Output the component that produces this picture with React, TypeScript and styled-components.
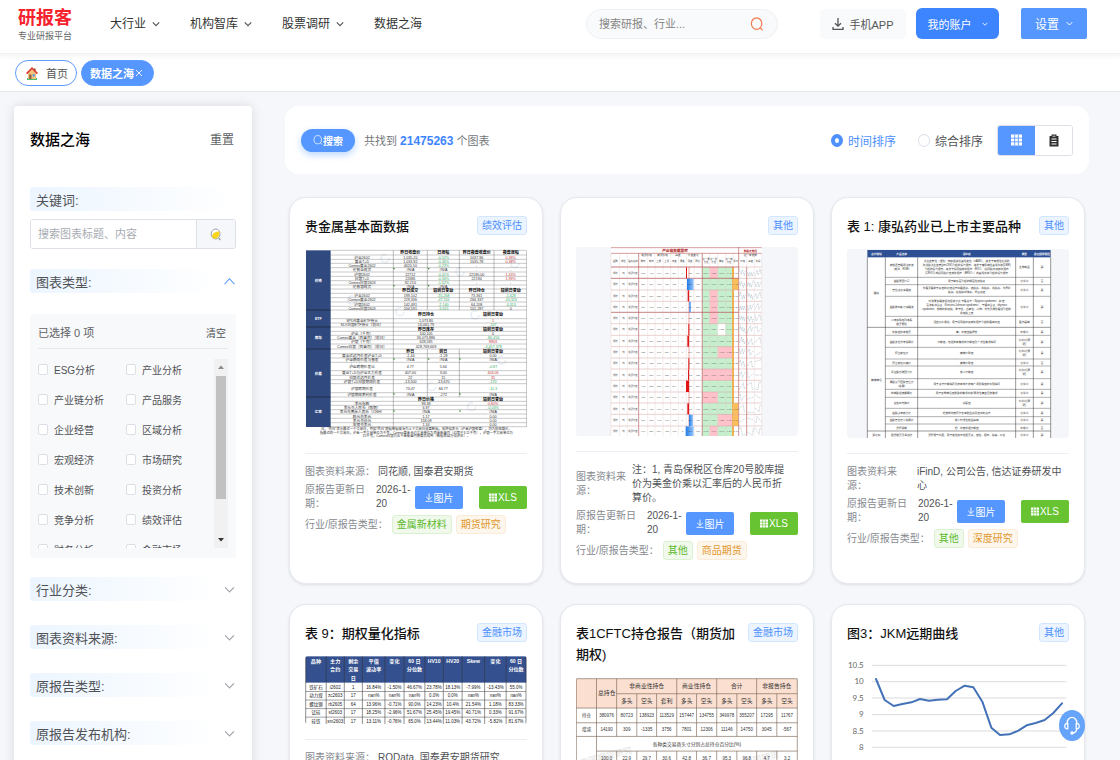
import React, { useState } from "react";
import styled, { createGlobalStyle, css } from "styled-components";

const Global = createGlobalStyle`
  *, *::before, *::after { box-sizing: border-box; }
  body {
    margin: 0;
    background: #f5f7fb;
    color: #303133;
    font-family: "Liberation Sans", "Noto Sans CJK SC", sans-serif;
    font-size: 12px;
    overflow-x: hidden;
  }
  button, input { font-family: inherit; }
  button { cursor: pointer; }
`;

/* ---------- top bar ---------- */

const Header = styled.header`
  display: flex;
  align-items: center;
  height: 54px;
  padding: 0 33px 6px 18px;
  background: #fff;
  border-bottom: 1px solid #f0f1f3;
  box-shadow: 0 2px 6px rgba(0, 0, 0, 0.05);
  position: relative;
`;

const Logo = styled.a`
  display: flex;
  flex-direction: column;
  width: 92px;
  text-decoration: none;
  strong { color: #f5222d; font-size: 18px; line-height: 24px; }
  span { color: #666; font-size: 9px; line-height: 12px; }
`;

const Nav = styled.nav`
  display: flex;
  gap: 30px;
`;

const NavLink = styled.a`
  display: flex;
  align-items: center;
  gap: 6px;
  color: #333;
  font-size: 12px;
  line-height: 18px;
  text-decoration: none;
  white-space: nowrap;
`;

const Actions = styled.div`
  display: flex;
  align-items: center;
  margin-left: auto;
`;

const SearchBox = styled.label`
  display: flex;
  align-items: center;
  width: 192px;
  height: 30px;
  margin-right: 42px;
  padding: 0 13px 0 12px;
  border: 1px solid #eef0f2;
  border-radius: 15px;
  background: #f9fafb;
  input {
    flex: 1;
    min-width: 0;
    padding: 0;
    border: 0;
    outline: 0;
    background: none;
    font-size: 11px;
  }
  input::placeholder { color: #858585; }
`;

const AppButton = styled.button`
  display: flex;
  align-items: center;
  justify-content: center;
  gap: 5px;
  width: 86px;
  height: 30px;
  margin-right: 10px;
  border: 0;
  border-radius: 5px;
  background: #f9fafb;
  color: #555;
  font-size: 11px;
`;

const MenuButton = styled.button<{ $soft?: boolean }>`
  display: flex;
  align-items: center;
  justify-content: center;
  gap: ${(p) => (p.$soft ? 7 : 10)}px;
  width: ${(p) => (p.$soft ? 66 : 83)}px;
  height: 31px;
  margin-left: ${(p) => (p.$soft ? 22 : 0)}px;
  border: 0;
  border-radius: ${(p) => (p.$soft ? 2 : 6)}px;
  background: ${(p) => (p.$soft ? "#5596ff" : "#3d84ff")};
  color: #fff;
  font-size: ${(p) => (p.$soft ? 12 : 11)}px;
`;

const TabBar = styled.div`
  display: flex;
  gap: 4px;
  height: 38px;
  padding: 6px 15px;
  background: #fff;
  border-bottom: 1px solid #e6e8eb;
`;

const Tab = styled.button<{ $active?: boolean }>`
  display: flex;
  align-items: center;
  height: 26px;
  padding: 0 8px 0 10px;
  border: 1px solid #5c9bff;
  border-radius: 13px;
  font-size: 11px;
  background: #fff;
  color: #555;
  gap: 8px;
  ${(p) =>
    p.$active &&
    css`
      padding: 0 10px 0 8px;
      background: #5596ff;
      color: #fff;
      font-weight: 700;
      gap: 1px;
    `}
`;

/* ---------- page body ---------- */

const Body = styled.div`
  display: flex;
  align-items: stretch;
  gap: 33px;
  padding: 14px 31px 0 14px;
`;

const Sidebar = styled.aside`
  flex: 0 0 238px;
  padding: 23px 16px 40px;
  border-radius: 4px;
  background: #fff;
  box-shadow: 0 0 12px rgba(0, 0, 0, 0.12);
`;

const SideHead = styled.div`
  display: flex;
  align-items: center;
  justify-content: space-between;
  height: 18px;
  margin-bottom: 40px;
  h2 { margin: 0; font-size: 15px; font-weight: 500; color: #000; }
  button { padding: 0 2px; border: 0; background: none; color: #606266; font-size: 12px; }
`;

const Band = styled.div`
  display: flex;
  align-items: center;
  height: 24px;
  padding-left: 6px;
  border-radius: 3px;
  background: linear-gradient(90deg, #ecf5ff, rgba(255, 255, 255, 0));
  color: #505256;
  font-size: 13px;
`;

const Fold = styled.button`
  display: flex;
  align-items: center;
  justify-content: space-between;
  width: 100%;
  height: 24px;
  margin-top: 24px;
  padding: 0 1px 0 6px;
  border: 0;
  border-radius: 3px;
  background: linear-gradient(90deg, #ecf5ff, rgba(255, 255, 255, 0) 92%);
  color: #505256;
  font-size: 13px;
`;

const FoldFirst = styled(Fold)`
  margin-top: 20px;
`;

const KeywordRow = styled.div`
  display: flex;
  height: 30px;
  margin-top: 8px;
  border: 1px solid #dcdfe6;
  border-radius: 3px;
  overflow: hidden;
  input {
    flex: 1;
    min-width: 0;
    padding: 0 7px;
    border: 0;
    outline: 0;
    font-size: 11px;
  }
  input::placeholder { color: #a8abb2; }
  button {
    display: flex;
    align-items: center;
    justify-content: center;
    width: 39px;
    padding: 0;
    border: 0;
    border-left: 1px solid #dcdfe6;
    background: #f5f7fa;
  }
`;

const Picker = styled.div`
  margin: 21px 0 -5px;
  padding: 8px 8px 10px;
  border-radius: 3px;
  background: #f8f9fb;
`;

const PickerHead = styled.div`
  display: flex;
  align-items: center;
  justify-content: space-between;
  height: 27px;
  padding-bottom: 6px;
  border-bottom: 1px solid #e4e7ed;
  color: #606266;
  font-size: 11px;
  button { padding: 0 2px; border: 0; background: none; color: #505256; font-size: 10px; }
`;

const PickerBody = styled.div`
  display: flex;
  height: 189px;
  margin-top: 10px;
  overflow: hidden;
`;

const Options = styled.div`
  flex: 1;
  display: grid;
  grid-template-columns: 1fr 1fr;
  grid-auto-rows: 30px;
  overflow: hidden;
`;

const Option = styled.label`
  display: flex;
  align-items: center;
  gap: 6px;
  height: 20px;
  color: #505256;
  font-size: 10px;
  white-space: nowrap;
  input {
    appearance: none;
    width: 10px;
    height: 11px;
    margin: 0;
    border: 1px solid #dcdfe6;
    border-radius: 2px;
    background: #fff;
  }
  input:checked { background: #5596ff; }
`;

const ScrollTrack = styled.div`
  display: flex;
  flex-direction: column;
  align-items: center;
  justify-content: space-between;
  width: 14px;
  background: #f1f1f1;
  svg { display: block; }
`;

const ScrollThumb = styled.div`
  width: 10px;
  height: 123px;
  margin-bottom: auto;
  background: #c1c1c1;
`;

const Main = styled.main`
  flex: 1;
  min-width: 0;
`;

const Toolbar = styled.div`
  display: flex;
  align-items: center;
  height: 68px;
  padding: 0 16px;
  border-radius: 14px;
  background: #fff;
`;

const SearchButton = styled.button`
  display: flex;
  align-items: center;
  justify-content: center;
  width: 54px;
  height: 23px;
  margin-right: 9px;
  padding: 0;
  border: 0;
  border-radius: 12px;
  background: #5596ff;
  box-shadow: 0 3px 7px rgba(64, 140, 255, 0.35);
  color: #fff;
  font-size: 10px;
  font-weight: 700;
`;

const Found = styled.p`
  margin: 0 auto 0 0;
  color: #73767a;
  font-size: 11px;
  strong { color: #3d84ff; font-size: 12px; }
`;

const Sort = styled.label<{ $on: boolean }>`
  display: flex;
  align-items: center;
  gap: 5px;
  margin-left: 22px;
  color: ${(p) => (p.$on ? "#4d90fe" : "#505256")};
  font-size: 12px;
  input {
    appearance: none;
    width: 12px;
    height: 13px;
    margin: 0;
    border: ${(p) => (p.$on ? "4px solid #4d90fe" : "1px solid #dcdfe6")};
    border-radius: 50%;
    background: #fff;
  }
`;

const ViewSwitch = styled.div`
  display: flex;
  width: 76px;
  height: 31px;
  margin-left: 14px;
  border: 1px solid #dcdfe6;
  border-radius: 3px;
  overflow: hidden;
`;

const ViewButton = styled.button<{ $on?: boolean }>`
  flex: 1;
  display: flex;
  align-items: center;
  justify-content: center;
  padding: 0;
  border: 0;
  background: ${(p) => (p.$on ? "#5596ff" : "#fff")};
`;

const Grid = styled.div`
  display: grid;
  grid-template-columns: repeat(3, minmax(0, 1fr));
  gap: 20px 17px;
  padding: 23px 4px 24px;
`;

const Card = styled.article`
  padding: 18px 15px 23px;
  border: 1px solid #e6e9f0;
  border-radius: 17px;
  background: #fff;
  box-shadow: 0 1px 3px rgba(0, 0, 0, 0.1);
`;

const CardHead = styled.div`
  display: flex;
  align-items: flex-start;
  justify-content: space-between;
  gap: 10px;
  margin-bottom: 12px;
  h3 { margin: 0; color: #111; font-size: 13px; font-weight: 500; line-height: 21px; }
`;

const tones = {
  blue: ["#ecf5ff", "#d3e6ff", "#4d90fe"],
  green: ["#f0f9eb", "#dcf1d2", "#5cb92c"],
  orange: ["#fdf6ec", "#faecd8", "#e0982c"],
};

const Tag = styled.span<{ $tone: keyof typeof tones }>`
  flex: none;
  height: 19px;
  padding: 0 4px;
  border: 1px solid ${(p) => tones[p.$tone][1]};
  border-radius: 3px;
  background: ${(p) => tones[p.$tone][0]};
  color: ${(p) => tones[p.$tone][2]};
  font-size: 10px;
  line-height: 17px;
  white-space: nowrap;
`;

const Thumb = styled.svg`
  display: block;
  width: 100%;
  height: auto;
  border-radius: 3px;
`;

const CardFoot = styled.div`
  display: flex;
  flex-direction: column;
  gap: 4px;
  margin-top: 15px;
  padding-top: 11px;
  border-top: 1px solid #ebeef5;
  font-size: 10px;
  line-height: 14px;
`;

const InfoRow = styled.div`
  display: flex;
  align-items: center;
  color: #505256;
`;

const InfoLabel = styled.span<{ $width?: number; $gap: number }>`
  flex: none;
  width: ${(p) => (p.$width ? `${p.$width}px` : "auto")};
  margin-right: ${(p) => p.$gap}px;
  color: #86898f;
`;

const InfoValue = styled.span<{ $width?: number }>`
  max-width: ${(p) => (p.$width ? `${p.$width}px` : "none")};
`;

const TagGroup = styled.span`
  display: flex;
  gap: 4px;
`;

const FileButtons = styled.span`
  display: flex;
  gap: 16px;
  margin-left: auto;
`;

const FileButton = styled.button<{ $green?: boolean }>`
  display: flex;
  align-items: center;
  justify-content: center;
  gap: 1px;
  width: 48px;
  height: 23px;
  padding: 0;
  border: 0;
  border-radius: 2px;
  background: ${(p) => (p.$green ? "#67c332" : "#5596ff")};
  color: #fff;
  font-size: 10px;
`;

const HelpButton = styled.button`
  position: fixed;
  right: 35px;
  bottom: 19px;
  display: flex;
  align-items: center;
  justify-content: center;
  width: 26px;
  height: 31px;
  padding: 0;
  border: 0;
  border-radius: 50%;
  background: #66a3fb;
`;

/* ---------- icons ---------- */

const Chevron = ({ size = 8, color = "#555", up = false, thin = false }) => (
  <svg width={size} height={size} viewBox="0 0 10 10" fill="none" stroke={color} strokeWidth={thin ? 1 : 1.4}>
    <path d={up ? "M0.5 7.5 5 2.5 9.5 7.5" : "M1 3 5 7.2 9 3"} />
  </svg>
);

const Lens = ({ size, color, width = 1.2 }: { size: number; color: string; width?: number }) => (
  <svg width={size} height={size} viewBox="0 0 14 14" fill="none" stroke={color} strokeWidth={width}>
    <ellipse cx="6.6" cy="6.6" rx="5.2" ry="5.8" />
    <path d="M10.3 10.8 12.6 13.4" />
  </svg>
);

const TrayIcon = () => (
  <svg width="12" height="14" viewBox="0 0 12 14" fill="none" stroke="#555" strokeWidth="1.3">
    <path d="M6 1v8M3 6.2 6 9.2l3-3M1 10v2.4h10V10" />
  </svg>
);

const ArrowDown = () => (
  <svg width="8" height="9" viewBox="0 0 8 9" fill="none" stroke="#fff" strokeWidth="0.9">
    <path d="M4 0.5v6M1.2 3.8 4 6.6l2.8-2.8M0.5 8.3h7" />
  </svg>
);

const GridIcon = ({ w = 8, h = 9, line = "#67c332" }) => (
  <svg width={w} height={h} viewBox="0 0 9 9">
    <rect width="9" height="9" fill="#fff" />
    <path d="M3 0v9M6 0v9M0 3h9M0 6h9" stroke={line} strokeWidth="0.7" />
  </svg>
);

const ClipIcon = () => (
  <svg width="10" height="13" viewBox="0 0 10 13">
    <path d="M0.5 2h2V0.5h5V2h2v10.5h-9z" fill="#303133" />
    <path d="M2.5 5h5M2.5 7.5h5M2.5 10h5" stroke="#fff" strokeWidth="1" />
    <path d="M3.6 2.2h2.8" stroke="#fff" strokeWidth="0.8" />
  </svg>
);

const HouseIcon = () => (
  <svg width="12" height="13" viewBox="0 0 12 13">
    <rect x="1" y="11" width="10" height="2" fill="#4bbf6b" />
    <rect x="8" y="1.5" width="1.6" height="3" fill="#a3452c" />
    <path d="M2 6 6 2.4 10 6v6H2z" fill="#f2c27c" />
    <path d="M0.6 6.6 6 1.2l5.4 5.4" fill="none" stroke="#d93a2b" strokeWidth="1.6" />
    <rect x="3.2" y="7.5" width="2.2" height="4.5" fill="#8a5a3a" />
    <rect x="6.6" y="7.2" width="2.2" height="2.2" fill="#4d9be8" />
  </svg>
);

const BulbLens = () => (
  <svg width="12" height="13" viewBox="0 0 12 13">
    <ellipse cx="5.6" cy="6" rx="4.4" ry="5" fill="#fff" stroke="#9aa0a6" />
    <path d="M2 8.2C3 4.4 6 3.6 9.4 3.6 10.2 8 7 11 5 10.6 3.4 10.4 2.4 9.6 2 8.2z" fill="#f9d51c" />
    <path d="M8.6 10 10.4 12" stroke="#9aa0a6" strokeWidth="1.3" />
  </svg>
);

const Headset = () => (
  <svg width="16" height="19" viewBox="0 0 16 19" fill="none" stroke="#fff" strokeWidth="1.3">
    <path d="M3.2 8V7a4.8 5.6 0 0 1 9.6 0v1" />
    <path d="M3.8 7.6v5.2C2 13.2.8 12 .8 10.2S2 7.2 3.8 7.6zM12.2 7.6v5.2c1.8.4 3-.8 3-2.6s-1.2-3-3-2.6z" />
    <path d="M12.6 13c0 2.4-1.4 3.8-4 4" />
    <circle cx="8" cy="17" r="1" fill="#fff" />
  </svg>
);

/* ---------- thumbnails ---------- */

type Cell = [x: number, y: number, text: string, color?: string, bold?: boolean];

const Cells = ({ items, size, color = "#333" }: { items: Cell[]; size: number; color?: string }) => (
  <g fontSize={size} textAnchor="middle" fill={color}>
    {items.map(([x, y, text, own, bold], i) => (
      <text key={i} x={x} y={y + size * 0.36} fill={own} fontWeight={bold ? 700 : 400}>
        {text}
      </text>
    ))}
  </g>
);

const G = "#2fae66";
const R = "#c8383c";

const metalsWide: [number, string, string, string, string, string?, string?][] = [
  [202, "沪金2602", "1,035.20", "-0.52%", "1037.96", "0.38%"],
  [214, "黄金T+D", "1,033.92", "-0.36%", "1035.78", "0.38%"],
  [227, "Comex黄金2602", "4620.50", "-0.23%", "-", "-"],
  [240, "伦敦金现货", "#N/A", "#N/A", "-", "-"],
  [253, "沪银2602", "22712", "-0.41%", "22180.00", "1.43%"],
  [266, "白银T+D", "22686", "-0.34%", "22194", "1.99%"],
  [278, "Comex白银2603", "92.210", "-1.02%", "-", "-"],
  [291, "伦敦银现货", "#N/A", "#N/A", "-", "-"],
  [316, "沪金2602", "199,102", "-35,268", "73,361", "-1,628"],
  [330, "Comex黄金2602", "229,336", "-47,116", "266,337", "-10,324"],
  [343, "沪银2602", "142,491", "-2,140", "64,208", "-4,313"],
  [355, "Comex白银2603", "204,591", "-3,615", "101,287", "0"],
];
const metalsPair: [number, string, string, string, string?][] = [
  [393, "SPDR黄金ETF持仓", "1,073.80", "1", R],
  [405, "SLV白银ETF持仓（前日）", "16,061.79", "-107", G],
  [430, "沪金（千克）", "100,105", "0"],
  [443, "Comex黄金（百盎司）（前日）", "36,073,886", "-80,456", G],
  [456, "沪银（千克）", "628,595", "8903", R],
  [470, "Comex白银（百盎司）（前日）", "428,769,669", "-3,457,378", G],
  [640, "美元指数", "99.38", "0.80%", R],
  [652, "美元兑人民币（即期）", "6.97", "-0.03%", G],
  [665, "美元兑离岸人民币（CNH）", "#N/A", "#N/A"],
  [679, "欧元兑美元", "1.17", "0.00"],
  [691, "美元兑日元", "158.09", "0.00"],
  [704, "英镑兑美元", "1.34", "0.00"],
];
const metalsTriple: [number, string, string, string, string, string?][] = [
  [497, "黄金近远月价差沪金T+D", "-1.44", "-1.28", "0.00"],
  [510, "沪金期现价差与基差", "#N/A", "#N/A", "#N/A"],
  [529, "沪金跨期价差比", "4.77", "5.64", "-0.87", G],
  [549, "黄金T+D与沪金主力价差", "407.00", "3.00", "404.06", R],
  [562, "白银近远月价差", "22", "15", "35", R],
  [575, "沪银T+D白银期现价差", "-13,500", "-13,670", "-170", G],
  [595, "沪银跨期价差", "73.47", "84.77", "-11.3", G],
  [615, "沪银期现套利价差", "#N/A", "-272", "#N/A"],
];

const MetalsThumb = () => {
  const heads: Cell[] = [
    [376, 188, "昨日收盘价", "#000", true], [475, 188, "日涨幅", "#000", true],
    [575, 188, "昨日夜盘收盘价", "#000", true], [677, 188, "夜盘涨幅", "#000", true],
    [376, 303, "昨日成交", "#000", true], [475, 303, "较前日变动", "#000", true],
    [575, 303, "昨日持仓", "#000", true], [677, 303, "较前日变动", "#000", true],
    [423, 373, "昨日持仓", "#000", true], [624, 373, "较前日变动", "#000", true],
    [423, 418, "昨日库存", "#000", true], [624, 418, "较前日变动", "#000", true],
    [376, 485, "昨日", "#000", true], [475, 485, "前日", "#000", true], [624, 485, "较前日变动", "#000", true],
    [423, 628, "昨日价格", "#000", true], [624, 628, "较前日变动", "#000", true],
  ];
  const body: Cell[] = [];
  const tint = (s: string) => (s.startsWith("-") && s.length > 1 ? G : undefined);
  metalsWide.forEach(([y, a, b, c, d, e = ""]) =>
    body.push([231, y, a], [376, y, b], [475, y, c, tint(c)], [575, y, d],
      [677, y, e, e.includes("%") ? R : tint(e)]));
  metalsPair.forEach(([y, a, b, c, k]) => body.push([231, y, a], [423, y, b], [624, y, c, k]));
  metalsTriple.forEach(([y, a, b, c, d, k]) =>
    body.push([231, y, a], [376, y, b], [475, y, c], [624, y, d, k]));
  const lines = [181, 195, 208, 220, 233, 246, 259, 272, 285, 297, 310, 323, 336, 349, 360, 386, 399, 411, 424,
    436, 449, 462, 477, 491, 504, 517, 542, 556, 569, 581, 608, 621, 634, 646, 659, 672, 685, 698, 710];
  return (
    <Thumb viewBox="60 177 666 567" role="img" aria-label="贵金属基本面数据">
      <rect x="60" y="177" width="666" height="567" fill="#fff" />
      <g fill="none" stroke="#e9eff7" strokeWidth="5">
        {[[300, 205], [525, 245], [690, 220], [345, 365], [570, 375], [200, 330], [440, 590], [210, 520], [650, 510], [240, 680], [560, 650]].map(
          ([x, y]) => <circle key={`${x}-${y}`} cx={x} cy={y} r="12" strokeDasharray="60 20" />,
        )}
      </g>
      {lines.map((y) => <path key={y} d={`M137 ${y}H725`} stroke="#777" strokeWidth="1.2" />)}
      <path d="M325 181V710M427 181V360M427 477V621M523 181V360M523 477V621M627 181V360M725 181V710" stroke="#666" strokeWidth="1.3" fill="none" />
      <rect x="63" y="181" width="74" height="530" fill="#30497f" />
      <path d="M63 360H137M63 411H137M63 477H137M63 621H137" stroke="#111" strokeWidth="1.5" />
      <Cells size={11} items={[[100, 271, "价格", "#fff", true], [100, 386, "ETF", "#fff", true], [100, 444, "库存", "#fff", true], [100, 550, "价差", "#fff", true], [100, 666, "汇率", "#fff", true]]} />
      <Cells size={12} items={heads} />
      <Cells size={11} items={body} />
      <g fill="#2a8f2a">
        {[[325, 234], [429, 234], [325, 285], [429, 285], [325, 505], [429, 505], [523, 505], [325, 610], [523, 610], [325, 661], [523, 661]].map(
          ([x, y]) => <rect key={`${x}${y}`} x={x} y={y} width="4" height="4" />,
        )}
      </g>
      <Cells size={10} items={[
        [394, 717, "注：“昨日”表示最近一个交易日，例如“昨日”根据数据来源为上个交易日收盘数据，涨跌幅表示（沪金沪银夜盘），均为前结算价。"],
        [394, 727, "指最近的一个交易日，沪金一手交易单位为千克，Comex黄金合约交易单位为百金衡盎司（约等于3.11千克），沪银一手交易单位为"],
        [394, 737, "15千克，Comex白银为五千金衡盎司换算后得到（数据取自万得资讯）。"],
      ]} />
    </Thumb>
  );
};

const HeatThumb = () => {
  const rows = [231, 265, 300, 334, 367, 401, 436, 470, 504, 537, 571, 606, 639, 673, 708, 739];
  const cols = [171, 197, 220, 254, 281, 303, 327, 350, 373, 397, 420, 443, 467, 491, 515, 537, 554, 578, 601, 623];
  const pink: [number, number, number][] = [[467, 0, 24], [467, 2, 24], [467, 3, 24], [467, 4, 24], [491, 7, 44], [445, 9, 90], [445, 11, 46], [491, 13, 44], [467, 14, 24]];
  const blue: [number, number, number][] = [[399, 1, 20], [406, 3, 5], [405, 13, 12], [395, 14, 24]];
  const red: [number, number, number][] = [[396, 0, 3], [401, 2, 4], [403, 5, 3], [400, 6, 5], [403, 8, 3], [402, 9, 3], [396, 10, 9], [400, 12, 5]];
  const h = (r: number) => rows[r + 1] - rows[r];
  const text: Cell[] = [];
  for (let r = 0; r < 15; r++) {
    const y = rows[r] + h(r) / 2;
    for (let c = 0; c < 16; c++) {
      const x = (cols[c] + cols[c + 1]) / 2;
      const n = ((r * 37 + c * 53) % 89) + 10;
      text.push([x, y, c === 0 ? "钢材" : c === 1 ? "吨" : c === 2 ? "现货价差" : c === 8 ? `${n % 9}` : c > 10 ? `0.${n}` : `${n}${n % 7}`]);
    }
  }
  return (
    <Thumb viewBox="66 171 666 567" role="img" aria-label="产业链数据跟踪日报">
      <defs>
        <linearGradient id="bar">
          <stop offset="0" stopColor="#1f7be8" />
          <stop offset="1" stopColor="#9cc8fb" />
        </linearGradient>
      </defs>
      <rect x="66" y="171" width="666" height="567" fill="#f5f6f9" />
      <rect x="171" y="171" width="452" height="568" fill="#fff" />
      <rect x="445" y="231" width="90" height="508" fill="#c6efce" />
      {pink.map(([x, r, w], i) => <rect key={i} x={x} y={rows[r]} width={w} height={h(r)} fill="#ffc2cb" />)}
      <rect x="491" y={rows[5]} width="23" height={h(5)} fill="#fff" />
      <rect x="534" y="231" width="6" height="508" fill="#f4ae3d" />
      {[1, 12, 13].map((r) => <rect key={r} x="537" y={rows[r]} width="16" height={h(r)} fill="#fbbf5a" />)}
      {rows.slice(0, 15).map((y) => <path key={y} d={`M171 ${y}H623`} stroke="#d49c9c" strokeWidth="1.4" />)}
      {cols.map((x) => <path key={x} d={`M${x} 190V739`} stroke="#e2c6c6" strokeWidth="1" />)}
      <path d="M171 173H623M171 231H554M171 265H554M171 367H554M171 190H623M254 190V739M445 190V739M554 171V739M578 231V739" stroke="#b04a4a" strokeWidth="1.6" fill="none" />
      <path d="M405 231V739" stroke="#d55" strokeWidth="1.6" />
      {blue.map(([x, r, w], i) => <rect key={i} x={x} y={rows[r] + 1} width={w} height={h(r) - 1} fill="url(#bar)" />)}
      {red.map(([x, r, w], i) => <rect key={i} x={x} y={rows[r] + 1} width={w} height={h(r) - 1} fill="#e01616" />)}
      <Cells size={7} color="#555" items={text} />
      <Cells size={11} items={[[363, 182, "产业链数据跟踪", "#a11", true]]} />
      <Cells size={8} items={[[589, 182, "数据走势图", "#a11", true], [278, 195, "现货价格"], [326, 195, "期货价格"], [372, 195, "基差"], [418, 195, "价差变化"], [589, 195, "近一年走势"]]} />
      <Cells size={7} items={[[184, 212, "品种"], [208, 212, "单位"], [237, 212, "指标名称"], [267, 214, "昨日"], [292, 214, "前日"], [314, 214, "上周"], [338, 214, "上月"], [361, 214, "日变"], [385, 214, "周变"], [408, 214, "月变"], [431, 214, "同比"], [456, 208, "近一周"], [456, 217, "分位"], [479, 208, "近一月"], [479, 217, "分位"], [502, 212, "季度"], [525, 208, "近一年"], [525, 217, "分位"], [545, 212, "评价"], [566, 214, "价格"], [590, 214, "基差"], [612, 214, "利润"]]} />
      <g fill="none" stroke="#7d93a3" strokeWidth="1.1">
        {rows.slice(0, 15).map((y, r) =>
          [556, 580, 603].map((x, c) => {
            const d = [0, 1, 2, 3, 4, 5, 6].map((k) => `${x + k * 3},${y + 5 + ((r * 7 + c * 11 + k * (9 + r + c * 3)) % 24)}`).join(" ");
            return <polyline key={`${r}-${c}`} points={d} strokeDasharray="5 2" />;
          }),
        )}
      </g>
    </Thumb>
  );
};

const drugRows: [number, string[], string[], string[], string][] = [
  [232, ["康柏西普眼用注射液", "（朗沐，RISE）"], ["新生血管性（湿性）年龄相关性黄斑变性（nAMD），继发于病理性近视的", "脉络膜新生血管(pmCNV)引起的视力损伤、继发于糖尿病性黄斑水肿(DME)", "引起的视力损伤、继发于视网膜静脉阻塞（RVO）（视网膜中央静脉阻塞", "(CRVO) 或视网膜分支静脉阻塞（BRVO））的黄斑水肿引起的视力损伤"], ["生物制品"], "是"],
  [273, ["盐酸莫西沙星"], ["用于敏感菌引起的细菌性结膜炎"], ["化学药"], "否"],
  [301, ["普拉洛芬滴眼液"], ["外眼及眼前节炎症的对症治疗如眼睑炎、结膜炎、角膜炎、巩膜炎、浅层巩", "膜炎、虹膜睫状体炎、术后炎症"], ["化学药"], "是"],
  [350, ["盐酸依匹斯汀滴眼液"], ["环孢素滴眼液促进泪液分泌 干眼治疗（Sjögren syndrome）和 史", "蒂文斯综合征（Stevens-Johnson syndrome），干眼综合征（dryness", "syndrome）伴随的角结膜、季节性、过敏性、药物、外伤及隐形眼镜引起的", "角结膜上皮"], ["化学药"], "是"],
  [396, ["二甲双胍格列本脲", "胶囊颗粒"], ["活血化瘀通络，用于视网膜中央静脉阻塞引起的眼底出血"], ["医疗器械"], "否"],
  [426, ["松龄血脉康胶囊"], ["高、中度血脂异常"], ["中成药"], "是"],
  [455, ["盐酸文拉法辛缓释片"], ["抑郁症、包括伴有焦虑的抑郁症及广泛性焦虑障碍"], ["化学药(原", "研)"], "是"],
  [490, ["阿立哌唑片"], ["精神分裂症"], ["化学药(原", "研)"], "是"],
  [518, ["阿立哌唑口崩片"], ["精神分裂症"], ["化学药"], "否"],
  [547, ["氢溴酸伏硫西汀片"], ["成人抑郁症"], ["化学药(原", "研)"], "是"],
  [582, ["草酸艾司西酞普兰片", "（缓释）"], ["用于治疗抑郁障碍及伴有或不伴有广场恐惧症的惊恐障碍"], ["化学药"], "是"],
  [610, ["枸橼酸坦度螺酮片"], ["用于各种神经症所致的焦虑状态/原发性高血压伴焦虑"], ["化学药"], "是"],
  [639, ["右佐匹克隆片"], ["失眠症"], ["化学药(原", "研)"], "是"],
  [668, ["盐酸多奈哌齐片"], ["轻度或中度阿尔茨海默型痴呆症状的治疗"], ["化学药"], "是"],
  [691, ["盐酸普拉克索缓释片"], ["成人特发性帕金森病"], ["化学药"], "是"],
  [713, ["舒肝解郁"], ["轻、中度单相抑郁症"], ["中成药"], "否"],
  [735, ["胆舒胶囊及渴络欣"], ["舒肝理气利胆，用于慢性结石性胆囊炎，慢性、胆石、胁痛、口苦"], ["化学药"], "是"],
];

const DrugThumb = () => {
  const text: Cell[] = [];
  drugRows.forEach(([y, a, b, c, d]) => {
    a.forEach((t, i) => text.push([230, y + (i - (a.length - 1) / 2) * 12, t]));
    b.forEach((t, i) => text.push([425, y + (i - (b.length - 1) / 2) * 12, t]));
    c.forEach((t, i) => text.push([598, y + (i - (c.length - 1) / 2) * 12, t]));
    text.push([651, y, d]);
  });
  return (
    <Thumb viewBox="66 177 666 567" role="img" aria-label="康弘药业已上市主要品种">
      <rect x="66" y="177" width="666" height="567" fill="#f5f6f9" />
      <rect x="127" y="180" width="550" height="565" fill="#fff" />
      <rect x="127" y="180" width="550" height="22" fill="#2d4f93" />
      {[262, 284, 319, 379, 436, 472, 507, 528, 566, 598, 622, 655, 680, 702].map((y) => (
        <path key={y} d={`M181 ${y}H677`} stroke="#555" strokeWidth="1.4" />
      ))}
      <path d="M127 412H677M127 723H677M181 202V745M278 202V745M572 202V745M625 202V745M127 202V745M677 202V745" stroke="#333" strokeWidth="1.5" fill="none" />
      <Cells size={8} items={[[154, 191, "治疗领域", "#fff", true], [230, 191, "产品名称", "#fff", true], [425, 191, "适应症", "#fff", true], [598, 191, "类型", "#fff", true], [651, 191, "是否国家医保", "#fff", true], [154, 308, "眼科"], [154, 569, "精神神经"], [154, 735, "消化科"]]} />
      <Cells size={8} items={text} />
    </Thumb>
  );
};

const ivCols = [62, 122, 175, 228, 294, 350, 411, 465, 520, 586, 649, 707];
const ivHead = [["品种"], ["主力", "合约"], ["剩余", "交易", "日"], ["平值", "波动率"], ["变化"], ["60 日", "分位数"], ["HV10"], ["HV20"], ["Skew"], ["变化"], ["60 日", "分位数"]];
const ivRows = [
  ["铁矿石", "i2602", "1", "16.84%", "-1.50%", "46.67%", "23.78%", "18.13%", "-7.99%", "-13.43%", "55.0%"],
  ["动力煤", "zc2603", "17", "nan%", "nan%", "nan%", "0.0%", "0.0%", "nan%", "nan%", "nan%"],
  ["螺纹钢", "rb2605", "64", "13.96%", "-0.71%", "90.0%", "14.23%", "10.4%", "21.54%", "1.18%", "83.33%"],
  ["锰硅", "sf2603", "17", "18.25%", "-2.96%", "51.67%", "25.45%", "19.45%", "40.71%", "0.33%", "91.67%"],
  ["硅铁", "sm2603", "17", "13.11%", "-0.76%", "65.0%", "13.44%", "11.03%", "43.72%", "-5.82%", "81.67%"],
];

const OptionsThumb = () => {
  const mid = (i: number) => (ivCols[i] + ivCols[i + 1]) / 2;
  const head: Cell[] = ivHead.flatMap((ls, i) => ls.map((t, k): Cell => [mid(i), 184 + k * 24, t, "#fff", true]));
  const body: Cell[] = ivRows.flatMap((r, k) => r.map((t, i): Cell => [mid(i), 259 + k * 25, t, "#222"]));
  return (
    <Thumb viewBox="60 168 650 200" role="img" aria-label="期权量化指标">
      <rect x="60" y="168" width="650" height="200" fill="#fff" />
      <rect x="62" y="169" width="646" height="77" fill="#34508e" />
      {[272, 297, 322, 347].map((y) => <path key={y} d={`M62 ${y}H707`} stroke="#555" strokeWidth="1.6" />)}
      {ivCols.map((x) => <path key={x} d={`M${x} 169V370`} stroke="#333" strokeWidth="1.6" />)}
      <Cells size={15} items={head} />
      <Cells size={13} items={body} />
    </Thumb>
  );
};

const cftcCols = [856, 915, 974, 1033, 1091, 1150, 1208, 1267, 1326, 1384, 1443, 1503];
const cftcRows: [number, string[]][] = [
  [342, ["持仓", "380976", "80723", "138923", "113529", "157447", "134755", "349978", "355207", "17295", "11767"]],
  [384, ["增减", "14190", "309", "-1335", "3756", "7801", "12306", "11146", "14750", "3045", "-567"]],
  [469, ["", "100.0", "22.9", "29.7", "30.6", "42.8", "36.7", "95.3", "96.8", "4.7", "3.2"]],
];

const CftcThumb = () => {
  const mid = (i: number) => (cftcCols[i] + cftcCols[i + 1]) / 2;
  const subs = ["多头", "空头", "套利", "多头", "空头", "多头", "空头", "多头", "空头"];
  return (
    <Thumb viewBox="855 230 650 410" role="img" aria-label="CFTC持仓报告">
      <rect x="855" y="230" width="650" height="410" fill="#fff" />
      <rect x="856" y="235" width="647" height="86" fill="#fbe0d2" />
      <g fill="#e4e4e4" fontSize="26">
        <text transform="translate(870 490) rotate(-14)">中国期货研究</text>
        <text transform="translate(1350 490) rotate(-14)">中国期货</text>
      </g>
      <path d="M974 279H1503M856 321H1503M856 364H1503M856 404H1503M915 447H1503M915 492H1503M856 235H1503M856 235V600M915 235V600M974 235V404M974 447V600M1150 235V404M1267 235V404M1384 235V404M1503 235V600M1033 279V404M1091 279V404M1208 279V404M1326 279V404M1443 279V404M1033 447V600M1091 447V600M1150 447V600M1208 447V600M1267 447V600M1326 447V600M1384 447V600M1443 447V600" stroke="#75604f" strokeWidth="1.8" fill="none" />
      <Cells size={17} items={[[945, 278, "总持仓"], [1062, 257, "非商业性持仓"], [1208, 257, "商业性持仓"], [1326, 257, "合计"], [1443, 257, "非报告持仓"], ...subs.map((t, i): Cell => [mid(i + 2), 300, t])]} />
      <Cells size={13} items={cftcRows.flatMap(([y, r]) => r.map((t, i): Cell => [mid(i), y, t]))} />
      <Cells size={14} items={[[1209, 426, "各种类交易商头寸分别占总持仓百分比(%)"]]} />
    </Thumb>
  );
};

const CurveThumb = () => (
  <Thumb viewBox="82 648 666 400" role="img" aria-label="JKM远期曲线">
    {[10.5, 10, 9.5, 9, 8.5, 8, 7.5].map((v, i) => (
      <g key={v}>
        <path d={`M156 ${676 + Math.round(i * 49.2)}H740`} stroke="#dcdcdc" strokeWidth="3" />
        <text x="132" y={684 + Math.round(i * 49.2)} textAnchor="end" fontSize="24" fill="#666" fontFamily="Lato, sans-serif">{v}</text>
      </g>
    ))}
    <polyline
      fill="none"
      stroke="#4472b8"
      strokeWidth="6"
      strokeLinejoin="round"
      strokeLinecap="round"
      points="169,717 195,780 222,798 248,792 275,787 301,777 328,782 354,779 382,778 408,753 435,737 461,742 488,785 515,863 541,885 569,883 596,872 621,856 648,849 675,840 701,819 727,790"
    />
  </Thumb>
);

/* ---------- data ---------- */

interface Source { text: string; labelWidth?: number; gap: number; valueWidth?: number }
interface CardData {
  title: string;
  category: string;
  thumb: React.ReactNode;
  source?: Source;
  tags?: [string, string];
}

const cards: CardData[] = [
  { title: "贵金属基本面数据", category: "绩效评估", thumb: <MetalsThumb />, source: { text: "同花顺, 国泰君安期货", gap: 3 }, tags: ["金属新材料", "期货研究"] },
  { title: "", category: "其他", thumb: <HeatThumb />, source: { text: "注：1, 青岛保税区仓库20号胶库提价为美金价乘以汇率后的人民币折算价。", labelWidth: 54, gap: 2, valueWidth: 158 }, tags: ["其他", "商品期货"] },
  { title: "表 1: 康弘药业已上市主要品种", category: "其他", thumb: <DrugThumb />, source: { text: "iFinD, 公司公告, 信达证券研发中心", labelWidth: 56, gap: 14 }, tags: ["其他", "深度研究"] },
  { title: "表 9：期权量化指标", category: "金融市场", thumb: <OptionsThumb />, source: { text: "RQData, 国泰君安期货研究", gap: 3 } },
  { title: "表1CFTC持仓报告（期货加期权)", category: "金融市场", thumb: <CftcThumb /> },
  { title: "图3：JKM远期曲线", category: "其他", thumb: <CurveThumb /> },
];

const options = ["ESG分析", "产业分析", "产业链分析", "产品服务", "企业经营", "区域分析", "宏观经济", "市场研究", "技术创新", "投资分析", "竞争分析", "绩效评估", "财务分析", "金融市场"];
const folds = ["行业分类:", "图表资料来源:", "原报告类型:", "原报告发布机构:"];

const ChartCard = ({ title, category, thumb, source, tags }: CardData) => (
  <Card>
    <CardHead>
      <h3>{title}</h3>
      <Tag $tone="blue">{category}</Tag>
    </CardHead>
    {thumb}
    {source && (
      <CardFoot>
        <InfoRow>
          <InfoLabel $width={source.labelWidth} $gap={source.gap}>图表资料来源：</InfoLabel>
          <InfoValue $width={source.valueWidth}>{source.text}</InfoValue>
        </InfoRow>
        {tags && (
          <>
            <InfoRow>
              <InfoLabel $width={66} $gap={5}>原报告更新日期：</InfoLabel>
              <InfoValue $width={38}>2026-1-20</InfoValue>
              <FileButtons>
                <FileButton><ArrowDown />图片</FileButton>
                <FileButton $green><GridIcon />XLS</FileButton>
              </FileButtons>
            </InfoRow>
            <InfoRow>
              <InfoLabel $gap={4}>行业/原报告类型：</InfoLabel>
              <TagGroup>
                <Tag $tone="green">{tags[0]}</Tag>
                <Tag $tone="orange">{tags[1]}</Tag>
              </TagGroup>
            </InfoRow>
          </>
        )}
      </CardFoot>
    )}
  </Card>
);

export default function App() {
  const [sort, setSort] = useState("时间排序");
  return (
    <>
      <Global />
      <Header>
        <Logo href="#"><strong>研报客</strong><span>专业研报平台</span></Logo>
        <Nav>
          <NavLink href="#">大行业<Chevron /></NavLink>
          <NavLink href="#">机构智库<Chevron /></NavLink>
          <NavLink href="#">股票调研<Chevron /></NavLink>
          <NavLink href="#">数据之海</NavLink>
        </Nav>
        <Actions>
          <SearchBox>
            <input type="search" aria-label="搜索" placeholder="搜索研报、行业..." />
            <Lens size={14} color="#f47b50" />
          </SearchBox>
          <AppButton><TrayIcon />手机APP</AppButton>
          <MenuButton>我的账户<Chevron size={6} color="#fff" /></MenuButton>
          <MenuButton $soft>设置<Chevron size={7} color="#fff" /></MenuButton>
        </Actions>
      </Header>
      <TabBar>
        <Tab><HouseIcon />首页</Tab>
        <Tab $active>
          数据之海
          <svg width="8" height="8" viewBox="0 0 8 8" stroke="#fff" strokeWidth="0.9"><path d="M1 1 7 7M7 1 1 7" /></svg>
        </Tab>
      </TabBar>
      <Body>
        <Sidebar>
          <SideHead><h2>数据之海</h2><button>重置</button></SideHead>
          <Band as="label" htmlFor="keyword">关键词:</Band>
          <KeywordRow>
            <input id="keyword" placeholder="搜索图表标题、内容" />
            <button aria-label="搜索"><BulbLens /></button>
          </KeywordRow>
          <FoldFirst>图表类型:<Chevron size={11} color="#5596ff" up thin /></FoldFirst>
          <Picker>
            <PickerHead><span>已选择 0 项</span><button>清空</button></PickerHead>
            <PickerBody>
              <Options>
                {options.map((o) => (
                  <Option key={o}><input type="checkbox" />{o}</Option>
                ))}
              </Options>
              <ScrollTrack>
                <svg width="14" height="17" viewBox="0 0 14 17"><path d="M4 10 7 6.5 10 10z" fill="#8a8a8a" /></svg>
                <ScrollThumb />
                <svg width="14" height="17" viewBox="0 0 14 17"><path d="M4 7 7 10.5 10 7z" fill="#333" /></svg>
              </ScrollTrack>
            </PickerBody>
          </Picker>
          {folds.map((f) => (
            <Fold key={f}>{f}<Chevron size={11} color="#a0a3a9" thin /></Fold>
          ))}
        </Sidebar>
        <Main>
          <Toolbar>
            <SearchButton><Lens size={10} color="#fff" width={1} />搜索</SearchButton>
            <Found>共找到 <strong>21475263</strong> 个图表</Found>
            {["时间排序", "综合排序"].map((s) => (
              <Sort key={s} $on={sort === s}>
                <input type="radio" name="sort" checked={sort === s} onChange={() => setSort(s)} />
                {s}
              </Sort>
            ))}
            <ViewSwitch>
              <ViewButton $on aria-label="网格"><GridIcon w={11} h={12} line="#5596ff" /></ViewButton>
              <ViewButton aria-label="列表"><ClipIcon /></ViewButton>
            </ViewSwitch>
          </Toolbar>
          <Grid>
            {cards.map((c) => <ChartCard key={c.title} {...c} />)}
          </Grid>
        </Main>
      </Body>
      <HelpButton aria-label="客服"><Headset /></HelpButton>
    </>
  );
}
